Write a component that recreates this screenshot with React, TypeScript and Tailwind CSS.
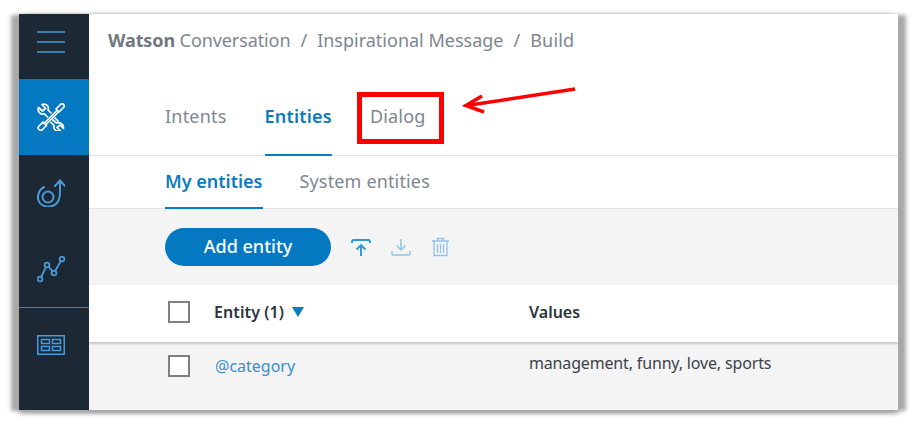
import React from 'react';

const sans = 'font-["Noto_Sans",sans-serif]';

const NavIcon: React.FC<{ children: React.ReactNode }> = ({ children }) => (
  <svg width="28" height="28" viewBox="0 0 28 28" fill="none" stroke="currentColor" strokeLinecap="round" strokeLinejoin="round">
    {children}
  </svg>
);

const App: React.FC = () => {
  return (
    <div className={`w-[916px] h-[424px] bg-white overflow-hidden pt-[14px] pl-[19px] ${sans}`}>
      <div className="relative w-[879px] h-[396px] flex bg-white shadow-[8px_1px_4px_#a8a8a8,-8px_1px_4px_#a8a8a8,0_3px_5px_#999999]">
        {/* side nav */}
        <aside className="w-[70px] shrink-0 bg-[#1c2833] flex flex-col text-[#4a9ad8]">
          <div className="h-[65px] flex items-center pl-[18px] pb-[9px]">
            <svg width="28" height="22" viewBox="0 0 28 22" stroke="currentColor" strokeWidth="1.6">
              <path d="M0 1h28M0 11h28M0 21h28" />
            </svg>
          </div>
          <div className="h-[76px] bg-[#0479c1] flex items-center pl-[18px] text-white">
            <NavIcon>
              <g strokeWidth="1.700">
                <path d="M1.500 4.500 5.500 8 8.500 5.500 5 1.500C9 0 12.500 3.500 11 7l3 3M1.500 4.500C0 8.500 3.500 12 7.500 11l3 3" />
                <path d="m16 17 3.500 3c3.500-1 7.500 1 7 5.500l-3.500-3.500-3 2.500 3.500 3.500c-4 1-7.500-1.500-6.500-5.500l-3-3M18 15l3 3" />
                <path d="m26.500 1.500c1 1 1 2 0 3L22 9l-3-3 4.500-4.500c1-1 2-1 3 0zM19.500 8 7 20.500M21 9.500 8.500 22" />
                <path d="M2 23l4-4 3.500 3.500-4 4c-1 1-2.500 1-3.500 0s-1-2.500 0-3.500z" />
              </g>
            </NavIcon>
          </div>
          <div className="h-[76px] flex items-center pl-[18px]">
            <NavIcon>
              <g strokeWidth="2">
                <path d="M7 8C1 11-.5 19 2.500 23.500 6 28.500 14 29 19 25c4-3.500 4-8 4-12V1.500" />
                <path d="m18 7 5-5.500L28 7" />
                <circle cx="11" cy="18" r="5.500" />
              </g>
            </NavIcon>
          </div>
          <div className="h-[77px] flex items-center pl-[18px] border-b border-[#3f80b8]">
            <NavIcon>
              <g strokeWidth="1.800">
                <circle cx="3" cy="24" r="2.400" />
                <circle cx="10" cy="10" r="2.400" />
                <circle cx="17" cy="18" r="2.400" />
                <circle cx="25" cy="4" r="2.400" />
                <path d="m4.200 22 4.700-9.800M11.600 12l3.900 4.200M18.200 16 23.800 6" />
              </g>
            </NavIcon>
          </div>
          <div className="flex-1 pl-[18px] pt-[27px]">
            <svg width="28" height="20" viewBox="0 0 28 20" fill="none" stroke="currentColor" strokeWidth="1.500">
              <rect x=".75" y=".75" width="26.500" height="18.500" />
              <rect x="4.500" y="4.500" width="8" height="4" />
              <rect x="15.500" y="4.500" width="8" height="4" />
              <rect x="4.500" y="11.500" width="8" height="4" />
              <rect x="15.500" y="11.500" width="8" height="4" />
            </svg>
          </div>
        </aside>

        {/* main */}
        <main className="flex-1 flex flex-col min-w-0 overflow-hidden">
          <div className="h-[65px] pl-[19px] pt-[12px] text-[18px] leading-[28px] text-[#7d8790] flex gap-[10px] whitespace-nowrap">
            <span className="tracking-[-0.1px]">
              <span className="font-bold text-[#6f7880]">Watson</span> Conversation
            </span>
            <span>/</span>
            <span>Inspirational Message</span>
            <span>/</span>
            <span className="tracking-[0.2px]">Build</span>
          </div>

          <nav className="h-[77px] pl-[76px] flex items-stretch gap-[38px] border-b border-[#e3e3e3] text-[18px] tracking-[0.2px]">
            <div className="pt-[24px] text-[#7d8790]">Intents</div>
            <div className="pt-[24px] font-semibold text-[#0a7cc1] border-b-2 border-[#0a7cc1] -mb-px">Entities</div>
            <div className="pt-[24px] text-[#7d8790]">Dialog</div>
          </nav>

          <nav className="h-[53px] pl-[76px] flex items-stretch gap-[37px] border-b border-[#e3e3e3] text-[18px]">
            <div className="pt-[12px] font-semibold text-[#0a7cc1] border-b-2 border-[#0a7cc1] -mb-px">My entities</div>
            <div className="pt-[12px] text-[#7d8790] tracking-[0.15px]">System entities</div>
          </nav>

          <div className="h-[76px] bg-[#f4f4f4] pl-[76px] flex items-center">
            <button className="w-[166px] h-[38px] rounded-full bg-[#0479c1] text-white text-[18px] font-medium pb-[2px]">
              Add entity
            </button>
            <div className="flex items-center ml-[20px] gap-[20px] text-[#2c96d8]">
              <svg width="20" height="17" viewBox="0 0 20 17" fill="none" stroke="currentColor" strokeWidth="1.900">
                <path d="M1 4V2.500Q1 1 2.500 1h15Q19 1 19 2.500V4M10 17V6M5.500 10.500 10 6l4.500 4.500" />
              </svg>
              <svg width="20" height="17" viewBox="0 0 20 17" fill="none" stroke="currentColor" strokeWidth="1.500" className="opacity-50">
                <path d="M1 12v3q0 1 1 1h16q1 0 1-1v-3M10 0v11M5.500 6.500l4.500 4.500 4.500-4.500" />
              </svg>
              <svg width="19" height="20" viewBox="0 0 19 20" fill="none" stroke="currentColor" strokeWidth="1.300" className="opacity-50">
                <path d="M1 4h17M6.500 4V1.500h6V4M3 4v14.500h13V4M6.500 7v9M9.500 7v9M12.500 7v9" />
              </svg>
            </div>
          </div>

          <div className="relative h-[57px] bg-white flex items-center pl-[79px] pb-[4px] text-[16px] font-semibold text-[#2b333b] shadow-[0_2px_2px_#c8c8c8]">
            <span className="w-[22px] h-[22px] border-2 border-[#7f7f7f] bg-white" />
            <span className="ml-[24px] w-[315px] flex items-center gap-[8px] tracking-[0.1px]">
              Entity (1)
              <span className="w-0 h-0 border-x-[6.5px] border-t-[10px] border-x-transparent border-t-[#0a7cc1]" />
            </span>
            <span>Values</span>
          </div>

          <div className="flex-1 bg-[#f4f4f4] flex items-start pl-[79px] pt-[13px] text-[16px]">
            <span className="w-[22px] h-[22px] border-2 border-[#7f7f7f] bg-white" />
            <span className="ml-[25px] w-[314px] text-[#3b8fd0] -mt-[1px]">@category</span>
            <span className="text-[#3a424a] -mt-[4px] tracking-[-0.16px]">management, funny, love, sports</span>
          </div>
        </main>

        {/* annotation drawn over the screenshot */}
        <div className="absolute left-[338px] top-[78px] w-[87px] h-[52px] border-[5px] border-[#ff0000]" />
        <svg className="absolute left-[443px] top-[72px]" width="118" height="30" viewBox="0 0 118 30" fill="none" stroke="#ff0000" strokeWidth="3.500">
          <path d="M113 3 5 19.500" />
          <path d="M20 10 4 19.500 22 26" />
        </svg>
      </div>
    </div>
  );
};

export default App;
